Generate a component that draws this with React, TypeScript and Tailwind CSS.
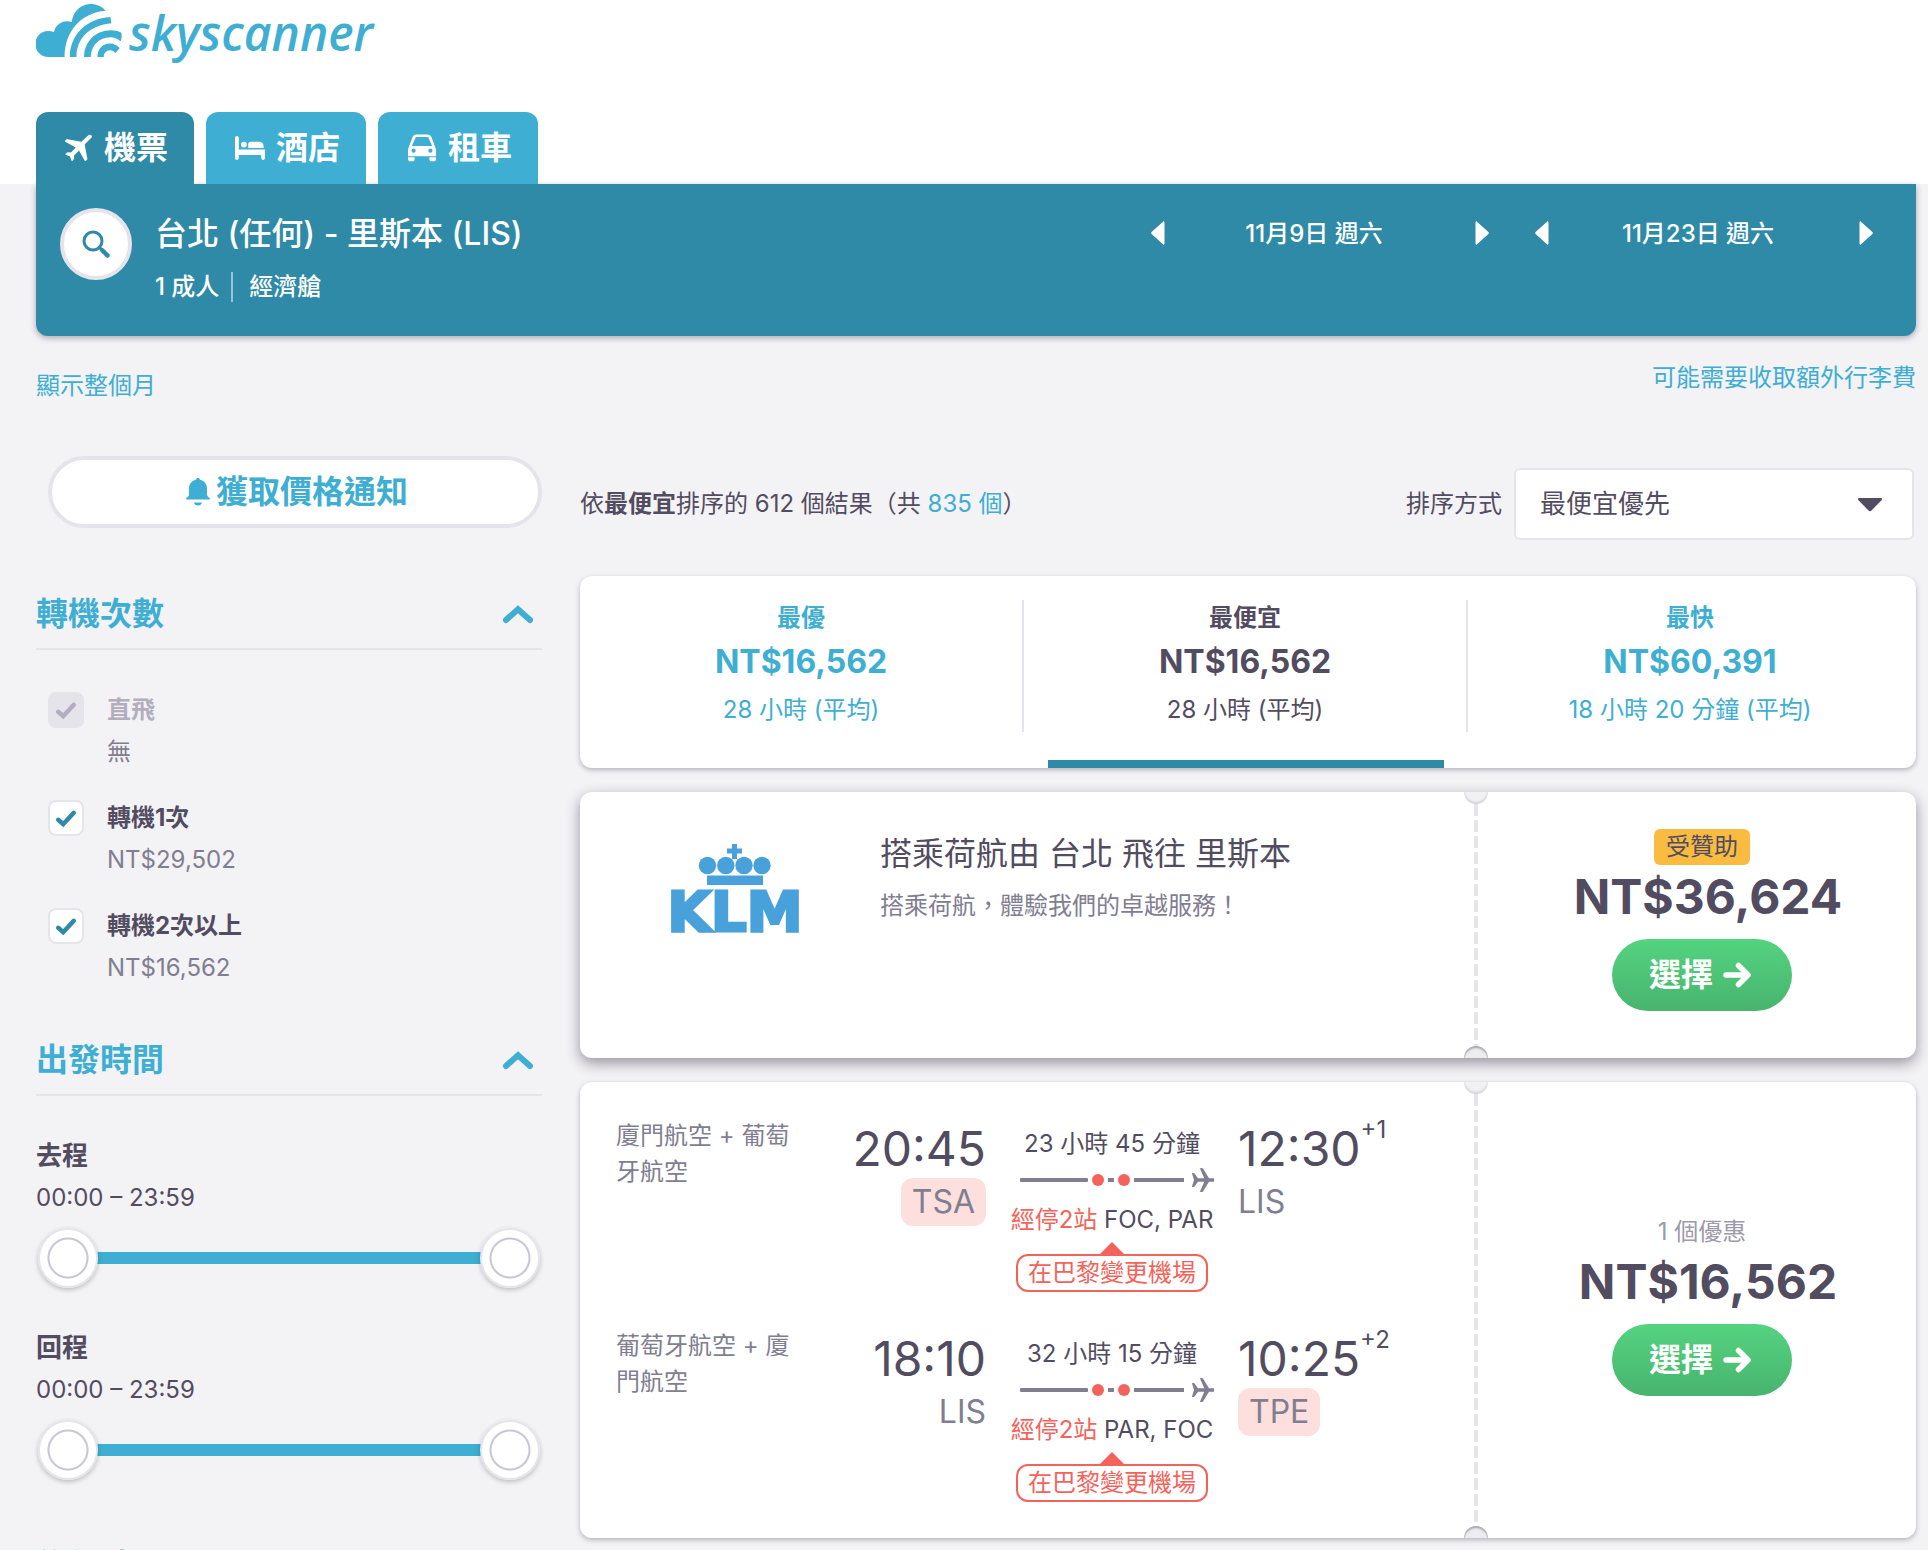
import { useState } from "react";
import type { ReactNode } from "react";

interface Stop {
  value: string;
  label: string;
  price: string;
  disabled?: boolean;
}

interface LegType {
  airline: string;
  depart: string;
  from: string;
  fromChanged?: boolean;
  duration: string;
  via: string;
  warning: string;
  arrive: string;
  dayOffset: string;
  to: string;
  toChanged?: boolean;
}

const stops: Stop[] = [
  { value: "direct", label: "直飛", price: "無", disabled: true },
  { value: "one", label: "轉機1次", price: "NT$29,502" },
  { value: "two", label: "轉機2次以上", price: "NT$16,562" },
];

const sortTabs = [
  { id: "best", label: "最優", price: "NT$16,562", duration: "28 小時 (平均)" },
  { id: "cheapest", label: "最便宜", price: "NT$16,562", duration: "28 小時 (平均)" },
  { id: "fastest", label: "最快", price: "NT$60,391", duration: "18 小時 20 分鐘 (平均)" },
];

const legs: LegType[] = [
  {
    airline: "廈門航空 + 葡萄牙航空",
    depart: "20:45",
    from: "TSA",
    fromChanged: true,
    duration: "23 小時 45 分鐘",
    via: "FOC, PAR",
    warning: "在巴黎變更機場",
    arrive: "12:30",
    dayOffset: "+1",
    to: "LIS",
  },
  {
    airline: "葡萄牙航空 + 廈門航空",
    depart: "18:10",
    from: "LIS",
    duration: "32 小時 15 分鐘",
    via: "PAR, FOC",
    warning: "在巴黎變更機場",
    arrive: "10:25",
    dayOffset: "+2",
    to: "TPE",
    toChanged: true,
  },
];

function CloudLogo() {
  return (
    <svg viewBox="18 12 262 162" className="h-[54px] w-[87px]" fill="currentColor" aria-hidden="true">
      <path d="M104 171H57A39 39 0 1 1 72 97A40 40 0 0 1 126 66A58 58 0 0 1 228 32C150 38 104 98 104 171Z" />
      <path d="M120 171C120 105 170 55 242 51L245 70C180 76 140 115 140 171Z" />
      <path d="M163 171C163 125 198 91 243 91C255 91 265 93 275 98C277 108 276 116 273 124C263 116 253 112 242 112C208 112 183 138 183 171Z" />
      <path d="M203 171C203 147 220 131 240 131C252 131 262 136 270 144L257 160C252 153 246 151 240 151C230 151 222 160 222 171Z" />
    </svg>
  );
}

function PlaneIcon() {
  return (
    <svg viewBox="0 0 28 28" className="h-7 w-7" fill="currentColor" aria-hidden="true">
      <path d="M27.300 1.200c.7.700.8 1.700 0 2.500L20.700 10.500l2.600 14.100c.1.500 0 .9-.3 1.200l-.8.800c-.6.500-1.300.4-1.600-.2L15 16.400l-5 5 .2 2.700c0 .4-.1.700-.3.900l-1.300 1.800c-.3.400-.8.300-1-.1l-1.700-4.100-4.200-1.800c-.5-.2-.6-.7-.1-1l1.800-1.200c.3-.2.600-.3.900-.3l2.700.2 4.800-5L1.600 8.100c-.7-.3-.8-1.100-.2-1.600l.8-.9c.3-.3.800-.4 1.200-.3l14 2.500 6.700-6.400c.9-.9 2.300-1 3.200-.2Z" />
    </svg>
  );
}

function BedIcon() {
  return (
    <svg viewBox="0 0 30 28" className="h-7 w-[30px]" fill="currentColor" aria-hidden="true">
      <path d="M1.900 2C.8 2 0 2.800 0 3.900v20.200C0 25.200.8 26 1.900 26s1.900-.8 1.900-1.900V21h22.400v3.100c0 1.100.8 1.900 1.900 1.900s1.900-.8 1.900-1.900V15.400H3.800V3.900C3.800 2.800 3 2 1.900 2Z" />
      <circle cx="8.900" cy="10.600" r="2.900" />
      <path d="M14.200 14H28.600V12c0-2.500-1.800-4.200-4.300-4.200h-8.700c-1.400 0-2.400 1-2.400 2.400v2.800c0 .6.400 1 1 1Z" />
    </svg>
  );
}

function CarIcon() {
  return (
    <svg viewBox="0 0 28 28" className="h-7 w-7" fill="currentColor" aria-hidden="true">
      <path
        fillRule="evenodd"
        d="M8.200.5h11.600c1.700 0 3 .9 3.600 2.500l3.900 10.200c.4 1 .7 2.200.7 3.300v5.700H0v-5.700c0-1.100.3-2.300.7-3.300L4.600 3C5.200 1.400 6.500.5 8.200.5ZM7.500 3.700 3.900 12h20.200L20.500 3.700c-.2-.5-.6-.7-1.100-.7H8.600c-.5 0-.9.200-1.100.7ZM5.600 14.600a2.100 2.100 0 1 0 0 4.200 2.100 2.100 0 0 0 0-4.200Zm16.800 0a2.100 2.100 0 1 0 0 4.200 2.100 2.100 0 0 0 0-4.200Z"
      />
      <path d="M0 23.200h6.600v2c0 1.200-.9 2.100-2.100 2.100H2.100C.9 27.300 0 26.400 0 25.200v-2ZM21.400 23.200H28v2c0 1.200-.9 2.100-2.100 2.100h-2.400c-1.200 0-2.100-.9-2.100-2.100v-2Z" />
    </svg>
  );
}

function Triangle({ flip }: { flip?: boolean }) {
  return (
    <svg viewBox="0 0 14 24" className="h-6 w-3.5" fill="currentColor" aria-hidden="true">
      <path d={flip ? "M.5 1.500V22.500C.5 23.800 1.600 24 2.300 23.100L13.400 13Q14.200 12 13.400 11L2.300.9C1.600 0 .5.200.5 1.500Z" : "M13.500 1.500V22.500C13.500 23.800 12.400 24 11.700 23.100L.6 13Q-.2 12 .6 11L11.700.9C12.400 0 13.500.2 13.500 1.500Z"} />
    </svg>
  );
}

function KlmLogo() {
  return (
    <svg viewBox="0 0 150 108" className="h-[108px] w-[150px]" fill="#48a1da" role="img" aria-label="KLM">
      <path d="M71 0h5v4.500h5v5h-5V15h-5V9.500h-5v-5h5Z" />
      <circle cx="46.500" cy="21.500" r="8.700" />
      <circle cx="64.800" cy="21.500" r="8.700" />
      <circle cx="83" cy="21.500" r="8.700" />
      <circle cx="101" cy="21.500" r="8.700" />
      <path d="M46 31.500h56v9.500H46Z" />
      <text
        x="74"
        y="87"
        textAnchor="middle"
        stroke="#48a1da"
        strokeWidth="3"
        className="font-['DejaVu_Sans'] text-[56px] font-bold"
      >
        KLM
      </text>
    </svg>
  );
}

function DatePicker({ date, name }: { date: string; name: string }) {
  return (
    <div className="flex w-[338px] items-center justify-between">
      <button aria-label={`${name}前一天`}>
        <Triangle />
      </button>
      <button className="pt-0.5 pr-3 text-2xl leading-9 font-medium">{date}</button>
      <button aria-label={`${name}後一天`}>
        <Triangle flip />
      </button>
    </div>
  );
}

function FilterHeading({ title }: { title: string }) {
  return (
    <button className="flex h-[62px] w-full items-center justify-between border-b-2 border-[#e6e4eb] pr-2 pb-2 text-[32px] leading-[48px] font-bold text-[#3eaed2]">
      {title}
      <svg viewBox="0 0 32 20" className="h-5 w-8" fill="none" stroke="currentColor" strokeWidth="6" strokeLinecap="round" aria-hidden="true">
        <path d="M4 16 16 5.200 28 16" />
      </svg>
    </button>
  );
}

function StopOption({ stop }: { stop: Stop }) {
  return (
    <label className="flex gap-[23px]">
      <span className="relative h-9 w-9">
        <input
          type="checkbox"
          defaultChecked
          disabled={stop.disabled}
          className="peer h-9 w-9 appearance-none rounded-lg border-2 border-[#e6e4eb] bg-white disabled:bg-[#e6e4eb]"
        />
        <svg
          viewBox="0 0 36 36"
          className="pointer-events-none absolute inset-0 h-9 w-9 text-[#2e8aa6] opacity-0 peer-checked:opacity-100 peer-disabled:text-[#b2aebd]"
          fill="none"
          stroke="currentColor"
          strokeWidth="4.500"
          strokeLinecap="round"
          aria-hidden="true"
        >
          <path d="m10.200 19.800 5 4.400L25.800 12.800" />
        </svg>
      </span>
      <span className="flex flex-col gap-1.5 text-2xl leading-9">
        <span className={stop.disabled ? "font-bold text-[#b2aebd]" : "font-bold"}>{stop.label}</span>
        <span className="text-[#817e91]">{stop.price}</span>
      </span>
    </label>
  );
}

const rangeClass =
  "pointer-events-none absolute inset-0 h-[60px] w-full appearance-none bg-transparent [&::-webkit-slider-thumb]:pointer-events-auto [&::-webkit-slider-thumb]:h-[60px] [&::-webkit-slider-thumb]:w-[60px] [&::-webkit-slider-thumb]:appearance-none [&::-webkit-slider-thumb]:rounded-full [&::-webkit-slider-thumb]:border-2 [&::-webkit-slider-thumb]:border-[#e6e4eb] [&::-webkit-slider-thumb]:bg-[radial-gradient(circle,#fff_18px,#c8c6d2_19px,#c8c6d2_20px,#fff_21px)] [&::-webkit-slider-thumb]:shadow-[0_2px_5px_rgba(0,0,0,0.22)]";

const toTime = (m: number) =>
  `${String(Math.floor(m / 60)).padStart(2, "0")}:${String(m % 60).padStart(2, "0")}`;

function TimeRange({ title }: { title: string }) {
  const [start, setStart] = useState(0);
  const [end, setEnd] = useState(1439);

  return (
    <div>
      <p className="text-[26px] leading-9 font-bold">{title}</p>
      <p className="mt-1.5 text-2xl leading-9">
        {toTime(start)} – {toTime(end)}
      </p>
      <div className="relative mx-0.5 mt-3 flex h-[60px] items-center px-7">
        <div className="h-3 w-full bg-[#3eaed2]" />
        <input
          type="range"
          min={0}
          max={1439}
          value={start}
          onChange={(e) => setStart(Math.min(Number(e.target.value), end))}
          aria-label={`${title}最早時間`}
          className={rangeClass}
        />
        <input
          type="range"
          min={0}
          max={1439}
          value={end}
          onChange={(e) => setEnd(Math.max(Number(e.target.value), start))}
          aria-label={`${title}最晚時間`}
          className={rangeClass}
        />
      </div>
    </div>
  );
}

// Card split in two by a perforated line with a notch at each end
function TicketCard({ children, aside, sponsored }: { children: ReactNode; aside: ReactNode; sponsored?: boolean }) {
  return (
    <article
      className={`mt-6 flex rounded-xl bg-white ${
        sponsored
          ? "min-h-[266px] shadow-[0_5px_14px_rgba(37,32,51,0.45)]"
          : "shadow-[0_2px_5px_rgba(37,32,51,0.3)]"
      }`}
    >
      <div className="min-w-0 flex-1 pt-9 pr-14 pb-9 pl-9">{children}</div>
      <div className="flex w-6 flex-col items-center">
        <div className="h-3 w-6 rounded-b-full bg-[#f1f0f3] shadow-[inset_0_-2px_2px_rgba(37,32,51,0.14)]" />
        <div className="w-1 flex-1 bg-[repeating-linear-gradient(#e6e4eb_0_12px,transparent_12px_16px)]" />
        <div className="h-3 w-6 rounded-t-full bg-[#ecebee] shadow-[inset_0_2px_2px_rgba(37,32,51,0.35)]" />
      </div>
      <div className="flex w-[428px] flex-col items-center justify-center pb-2.5">
        {aside}
        <button className="mt-3 flex h-[72px] w-[180px] items-center justify-center gap-2.5 rounded-full bg-linear-to-b from-[#54d380] to-[#48b46e] pr-1 text-[32px] leading-[48px] font-bold text-white">
          選擇
          <svg viewBox="0 0 28 26" className="h-[26px] w-7" fill="none" stroke="currentColor" strokeWidth="5.500" strokeLinecap="round" strokeLinejoin="round" aria-hidden="true">
            <path d="M3 13h21M15.500 3.500 25 13l-9.500 9.500" />
          </svg>
        </button>
      </div>
    </article>
  );
}

function Airport({ code, changed }: { code: string; changed?: boolean }) {
  return (
    <span
      className={`rounded-xl text-[32px] leading-[48px] text-[#817e91] ${changed ? "bg-[#fddfdd] px-[11px]" : ""}`}
    >
      {code}
    </span>
  );
}

function Leg({ leg }: { leg: LegType }) {
  return (
    <div className="grid grid-cols-[176px_1fr_204px_1fr] gap-x-6">
      <p className="text-2xl leading-9 text-[#817e91]">{leg.airline}</p>
      <div className="flex flex-col items-end">
        <span className="pt-0.5 text-5xl leading-[58px]">{leg.depart}</span>
        <Airport code={leg.from} changed={leg.fromChanged} />
      </div>
      <div className="flex flex-col items-center pt-2 text-2xl leading-9 whitespace-nowrap">
        <span>{leg.duration}</span>
        <svg viewBox="0 0 204 24" className="mt-1.5 h-6 w-[204px]" fill="#817e91" aria-hidden="true">
          <rect x="10" y="10" width="68" height="4" rx="1" />
          <circle cx="88" cy="12" r="6" fill="#f4635b" />
          <rect x="98" y="10" width="6" height="4" />
          <circle cx="114" cy="12" r="6" fill="#f4635b" />
          <rect x="124" y="10" width="50" height="4" />
          <path d="M182 5.500q0-.5.500-.5h1.200q.5 0 .8.400L188 10.300h6.300L190.200.900q-.3-.9.600-.9h1.200q.6 0 1 .6L199 10.300h4.400a1.700 1.700 0 0 1 0 3.400H199L193 23.400q-.4.600-1 .6h-1.200q-.9 0-.6-.9l4.100-9.400H188l-3.500 4.900q-.3.400-.8.400h-1.200q-.5 0-.5-.5L184 12Z" />
        </svg>
        <span className="mt-2.5">
          <span className="text-[#f4635b]">經停2站</span> {leg.via}
        </span>
        <svg viewBox="0 0 24 12" className="mt-1 h-3 w-6" fill="#f4635b" aria-hidden="true">
          <path d="M12 0 24 12H0Z" />
        </svg>
        <span className="rounded-xl border-2 border-[#f4635b] px-2.5 leading-[34px] text-[#f4635b]">{leg.warning}</span>
      </div>
      <div className="flex flex-col items-start">
        <span className="flex items-start">
          <span className="pt-0.5 text-5xl leading-[58px]">{leg.arrive}</span>
          <sup className="top-0 text-2xl leading-6">{leg.dayOffset}</sup>
        </span>
        <Airport code={leg.to} changed={leg.toChanged} />
      </div>
    </div>
  );
}

export default function App() {
  const [activeTab, setActiveTab] = useState("cheapest");

  return (
    <div className="h-screen overflow-hidden bg-[#f3f2f5] font-['Inter','Noto_Sans_CJK_TC',sans-serif] text-[#524c61]">
      <header className="flex h-[184px] flex-col justify-between bg-white px-9">
        <a href="#" className="flex h-[72px] items-start gap-1.5 self-start text-[#3eaed2]" aria-label="skyscanner">
          <span className="pt-1">
            <CloudLogo />
          </span>
          <span className="font-['Open_Sans'] text-[48px] leading-[66px] font-semibold italic">skyscanner</span>
        </a>
        <nav className="flex gap-3 text-[32px] leading-[48px] font-bold text-white">
          <a href="#" className="flex h-[72px] items-center gap-2 rounded-t-xl bg-[#2e8aa6] pr-[26px] pl-6">
            <span className="flex w-9 justify-center"><PlaneIcon /></span>
            機票
          </a>
          <a href="#" className="flex h-[72px] items-center gap-2 rounded-t-xl bg-[#3eaed2] px-[26px]">
            <span className="flex w-9 justify-center"><BedIcon /></span>
            酒店
          </a>
          <a href="#" className="flex h-[72px] items-center gap-2 rounded-t-xl bg-[#3eaed2] px-[26px]">
            <span className="flex w-9 justify-center"><CarIcon /></span>
            租車
          </a>
        </nav>
      </header>

      <div className="pr-3 pl-9">
        <section className="flex h-[152px] items-start justify-between rounded-b-xl bg-[#2e8aa6] pt-6 pr-[43px] pl-6 text-white shadow-[0_2px_6px_rgba(37,32,51,0.35)]">
          <div className="flex gap-[23px]">
            <button aria-label="搜尋" className="flex h-[72px] w-[72px] items-center justify-center rounded-full border-4 border-[#e6e4eb] bg-white text-[#2e8aa6]">
              <svg viewBox="0 0 28 28" className="h-7 w-7" fill="none" stroke="currentColor" strokeLinecap="round" aria-hidden="true">
                <circle cx="11" cy="11" r="9" strokeWidth="3" />
                <path d="m17.500 17.500 2 2" strokeWidth="3" />
                <path d="m20.500 20.500 5 5" strokeWidth="4.500" />
              </svg>
            </button>
            <div className="pt-0.5">
              <h1 className="text-[32px] leading-[48px] font-medium">台北 (任何) - 里斯本 (LIS)</h1>
              <p className="mt-3.5 flex items-center text-2xl leading-[30px] font-medium">
                <span className="border-r-2 border-white/50 pr-3">1 成人</span>
                <span className="pl-4">經濟艙</span>
              </p>
            </div>
          </div>
          <div className="flex gap-[46px] pt-1.5">
            <DatePicker date="11月9日 週六" name="去程" />
            <DatePicker date="11月23日 週六" name="回程" />
          </div>
        </section>

        <div className="flex h-[120px] justify-between pt-6 text-2xl leading-9 text-[#3eaed2]">
          <a href="#" className="pt-2">顯示整個月</a>
          <a href="#">可能需要收取額外行李費</a>
        </div>

        <div className="flex gap-[38px]">
          <aside className="w-[506px] shrink-0">
            <div className="pl-3">
              <button className="flex h-[72px] w-full items-center justify-center gap-1.5 rounded-full border-4 border-[#e6e4eb] bg-white pl-1 text-[32px] leading-[48px] font-bold text-[#3eaed2]">
                <svg viewBox="0 0 24 28" className="h-7 w-6" fill="currentColor" aria-hidden="true">
                  <path d="M12 0c1 0 1.800.7 2 1.700 4.200.9 7 4.300 7 8.600v6.200c0 1.500 1.200 2.600 2.600 3.400.6.400.5 1.500-.4 1.500H.8c-.9 0-1-1.100-.4-1.500C1.800 19.100 3 18 3 16.500v-6.200c0-4.300 2.800-7.700 7-8.600C10.200.7 11 0 12 0ZM8 24.500h8c-.4 1.900-2 3-4 3s-3.600-1.100-4-3Z" />
                </svg>
                獲取價格通知
              </button>
            </div>

            <section className="mt-[60px]">
              <FilterHeading title="轉機次數" />
              <div className="flex flex-col gap-[30px] pt-[42px] pl-3">
                {stops.map((stop) => (
                  <StopOption key={stop.value} stop={stop} />
                ))}
              </div>
            </section>

            <section className="mt-12">
              <FilterHeading title="出發時間" />
              <div className="flex flex-col gap-[42px] pt-[42px]">
                <TimeRange title="去程" />
                <TimeRange title="回程" />
              </div>
            </section>

            <section className="mt-[60px]">
              <FilterHeading title="旅行時間" />
            </section>
          </aside>

          <main className="min-w-0 flex-1 pt-3">
            <div className="flex items-center justify-between text-2xl leading-9">
              <p>
                依<b>最便宜</b>排序的 612 個結果（共 <a href="#" className="text-[#3eaed2]">835 個</a>）
              </p>
              <div className="flex items-center gap-3 pr-0.5">
                <label htmlFor="sort">排序方式</label>
                <div className="relative">
                  <select id="sort" defaultValue="cheapest" className="h-[72px] w-[400px] appearance-none rounded-md border-2 border-[#e6e4eb] bg-white px-6 text-[26px] leading-9">
                    <option value="best">最優優先</option>
                    <option value="cheapest">最便宜優先</option>
                    <option value="fastest">最快優先</option>
                  </select>
                  <svg viewBox="0 0 24 14" className="pointer-events-none absolute top-[30px] right-8 h-3.5 w-6" fill="currentColor" aria-hidden="true">
                    <path d="M1.500 0h21C24 0 24.300 1.400 23.500 2.300L13.500 12.500Q12 14 10.500 12.500L.5 2.300C-.3 1.400 0 0 1.500 0Z" />
                  </svg>
                </div>
              </div>
            </div>

            <div className="mt-9 grid grid-cols-3 rounded-xl bg-white pt-6 pr-1 shadow-[0_2px_5px_rgba(37,32,51,0.3)]">
              {sortTabs.map((tab, i) => (
                <button
                  key={tab.id}
                  onClick={() => setActiveTab(tab.id)}
                  className={`flex h-[168px] flex-col justify-between ${activeTab === tab.id ? "" : "text-[#3eaed2]"}`}
                >
                  <span
                    className={`flex h-[132px] w-full flex-col items-center text-2xl leading-9 ${
                      i < sortTabs.length - 1 ? "border-r-2 border-[#e6e4eb]" : ""
                    }`}
                  >
                    <span className="font-bold">{tab.label}</span>
                    <span className="pt-0.5 text-[32px] leading-[48px] font-bold">{tab.price}</span>
                    <span className="mt-1.5">{tab.duration}</span>
                  </span>
                  {activeTab === tab.id && (
                    <span className="w-full px-6">
                      <span className="block h-2 w-full bg-[#2e8aa6]" />
                    </span>
                  )}
                </button>
              ))}
            </div>

            <TicketCard
              sponsored
              aside={
                <>
                  <span className="rounded-md bg-[#f9bc41] px-3 text-2xl leading-9">受贊助</span>
                  <span className="mt-0.5 pl-3 text-5xl leading-[60px] font-bold">NT$36,624</span>
                </>
              }
            >
              <div className="flex gap-6">
                <div className="flex w-60 shrink-0 justify-center pt-4">
                  <KlmLogo />
                </div>
                <div>
                  <h2 className="pt-0.5 text-[32px] leading-[48px]">搭乘荷航由 台北 飛往 里斯本</h2>
                  <p className="mt-2.5 text-2xl leading-9 text-[#817e91]">搭乘荷航，體驗我們的卓越服務！</p>
                </div>
              </div>
            </TicketCard>

            <TicketCard
              aside={
                <>
                  <span className="text-2xl leading-9 text-[#9d9aaa]">1 個優惠</span>
                  <span className="mt-0.5 pl-3 text-5xl leading-[60px] font-bold">NT$16,562</span>
                </>
              }
            >
              <div className="flex flex-col gap-9">
                {legs.map((leg) => (
                  <Leg key={leg.depart} leg={leg} />
                ))}
              </div>
            </TicketCard>
          </main>
        </div>
      </div>
    </div>
  );
}
